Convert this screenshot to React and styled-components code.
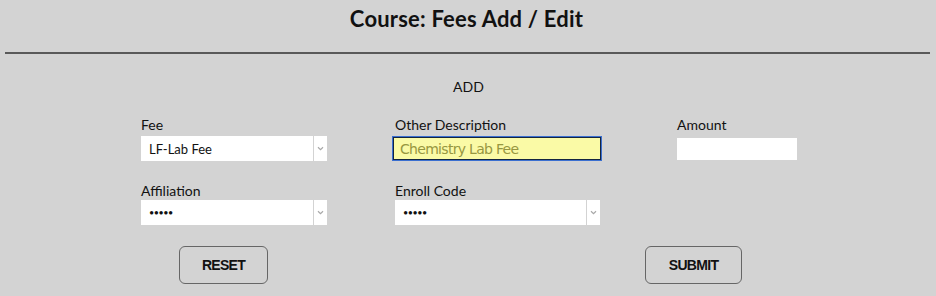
import React from "react";
import styled, { createGlobalStyle } from "styled-components";

const GlobalStyle = createGlobalStyle`
  html, body {
    margin: 0;
    padding: 0;
    background: #d3d3d3;
  }
  body {
    font-family: "Lato", "Noto Sans", sans-serif;
    color: #111;
  }
`;

export default function App() {
  return (
    <StPage>
      <GlobalStyle />
      <StHeader>
        <h1>Course: Fees Add / Edit</h1>
      </StHeader>
      <StMode>ADD</StMode>
      <StGrid>
        <StField>
          <StLabel>Fee</StLabel>
          <Select value="LF-Lab Fee" />
        </StField>
        <StField>
          <StLabel>Other Description</StLabel>
          <StDescInput defaultValue="Chemistry Lab Fee" />
        </StField>
        <StField>
          <StLabel>Amount</StLabel>
          <StAmountInput />
        </StField>
        <StField $second>
          <StLabel>Affiliation</StLabel>
          <Select value="•••••" dots />
        </StField>
        <StField $second>
          <StLabel>Enroll Code</StLabel>
          <Select value="•••••" dots width={205} />
        </StField>
      </StGrid>
      <StButtons>
        <StButton type="button" $width={89}>
          RESET
        </StButton>
        <StButton type="button" $width={97}>
          SUBMIT
        </StButton>
      </StButtons>
    </StPage>
  );
}

function Select({ value, dots, width = 186 }) {
  return (
    <StSelect $width={width}>
      <StSelectValue $dots={dots}>{value}</StSelectValue>
      <StArrow>
        <svg width="7" height="5" viewBox="0 0 7 5">
          <path d="M1 1.2 L3.5 3.6 L6 1.2" fill="none" stroke="#a8a8a8" strokeWidth="1.2" />
        </svg>
      </StArrow>
    </StSelect>
  );
}

const StPage = styled.div`
  width: 936px;
  height: 296px;
  overflow: hidden;
`;

const StHeader = styled.div`
  margin: 0 6px 0 5px;
  height: 52px;
  border-bottom: 2px solid #595959;
  display: flex;
  justify-content: center;
  h1 {
    margin: 6px 0 0 -2px;
    font-size: 22px;
    font-weight: 700;
    line-height: 26px;
    letter-spacing: 0.2px;
  }
`;

const StMode = styled.div`
  text-align: center;
  font-size: 14px;
  line-height: 16px;
  margin-top: 25px;
  padding-left: 1px;
`;

const StGrid = styled.div`
  display: grid;
  grid-template-columns: 254px 282px 120px;
  padding-left: 141px;
  margin-top: 22px;
  row-gap: 22px;
`;

const StField = styled.div`
  display: flex;
  flex-direction: column;
  gap: ${(p) => (p.$second ? "1px" : "3px")};
`;

const StLabel = styled.label`
  font-size: 14px;
  line-height: 16px;
  white-space: nowrap;
`;

const StSelect = styled.div`
  display: flex;
  gap: 1px;
  width: ${(p) => p.$width}px;
  height: 25px;
`;

const StSelectValue = styled.div`
  flex: 1;
  background: #fff;
  display: flex;
  align-items: center;
  padding-left: 8px;
  font-size: ${(p) => (p.$dots ? "9px" : "13px")};
  letter-spacing: ${(p) => (p.$dots ? "-0.5px" : "0")};
`;

const StArrow = styled.div`
  width: 13px;
  background: #fff;
  display: flex;
  align-items: center;
  justify-content: center;
`;

const StDescInput = styled.input`
  box-sizing: border-box;
  width: 210px;
  height: 25px;
  margin-left: -3px;
  background: #fafaa6;
  border: 2px solid #14243f;
  outline: 1px solid #3a6fd0;
  outline-offset: -1px;
  padding: 0 6px;
  font-family: "DejaVu Sans", "Open Sans", sans-serif;
  font-size: 14px;
  letter-spacing: -0.7px;
  color: #979740;
`;

const StAmountInput = styled.input`
  box-sizing: border-box;
  width: 120px;
  height: 22px;
  margin-top: 2px;
  border: none;
  background: #fff;
`;

const StButtons = styled.div`
  display: flex;
  justify-content: space-between;
  padding: 0 194px 0 179px;
  margin-top: 21px;
`;

const StButton = styled.button`
  box-sizing: border-box;
  width: ${(p) => p.$width}px;
  height: 38px;
  background: transparent;
  border: 1px solid #666;
  border-radius: 6px;
  font-family: "Liberation Sans Narrow", "Liberation Sans", sans-serif;
  font-size: 14px;
  font-weight: 700;
  letter-spacing: -0.7px;
  color: #111;
  cursor: pointer;
`;
